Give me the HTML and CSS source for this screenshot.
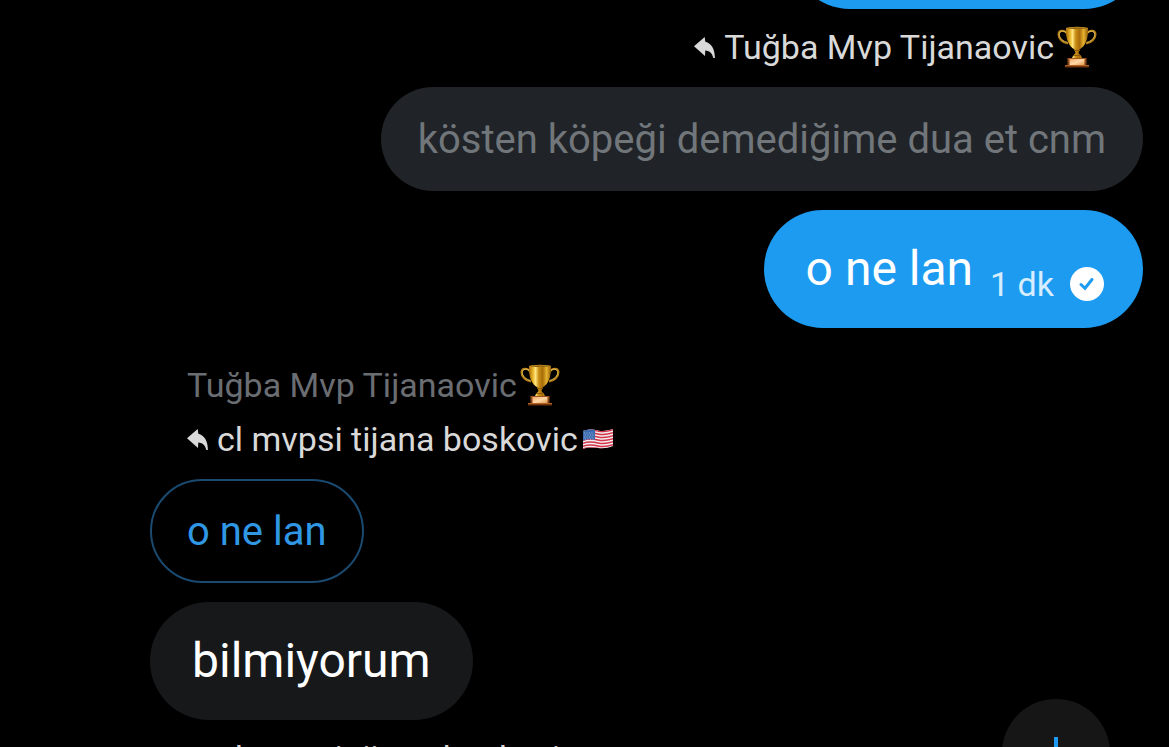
FILE: index.html
```
<!DOCTYPE html>
<html lang="tr">
<head>
  <meta charset="UTF-8" />
  <meta name="viewport" content="width=device-width, initial-scale=1.0" />
  <title>Mesajlar</title>
  <link rel="stylesheet" href="styles.css">
</head>
<body>
  <!-- shared icons -->
  <svg class="sprite" aria-hidden="true">
    <defs>
      <linearGradient id="gold" x1="0" y1="0" x2="1" y2="0">
        <stop offset="0" stop-color="#a86a08" />
        <stop offset="0.18" stop-color="#e8b52a" />
        <stop offset="0.3" stop-color="#ffe680" />
        <stop offset="0.44" stop-color="#c98d14" />
        <stop offset="0.62" stop-color="#a86c0a" />
        <stop offset="0.8" stop-color="#e6b22e" />
        <stop offset="1" stop-color="#8f5a08" />
      </linearGradient>
      <linearGradient id="wood" x1="0" y1="0" x2="0" y2="1">
        <stop offset="0" stop-color="#a4581c" />
        <stop offset="1" stop-color="#6b2f0c" />
      </linearGradient>
      <linearGradient id="plate" x1="0" y1="0" x2="1" y2="1">
        <stop offset="0" stop-color="#eda868" />
        <stop offset="0.5" stop-color="#ffd8a8" />
        <stop offset="1" stop-color="#e09a50" />
      </linearGradient>
      <clipPath id="flag-shape">
        <path d="M1 2C6 0 10 0 16 1.500S26 1 31 0V17C26 19 22 19.500 16 19S6 18 1 20Z" />
      </clipPath>
    </defs>
    <symbol id="reply" viewBox="0 0 21 21">
      <path d="M0 9.300L10.700 0L11.300 4.800C17.500 6.500 20.800 12 20.900 21H19.300C18.300 16.500 16 13.800 11.300 13.500L11 19Z" fill="currentColor" />
    </symbol>
    <symbol id="trophy" viewBox="0 0 40 42">
      <path d="M10.500 8C8 3.500 1.500 3.500 1.500 8.500C1.500 13 6 17 11 17.500M29.500 8C32 3.500 38.500 3.500 38.500 8.500C38.500 13 34 17 29 17.500" fill="none" stroke="#b57d16" stroke-width="2" />
      <path d="M10 7.500C7.500 4 2.300 4.500 2.300 8.500C2.300 12 6 15.500 10.500 16.300M30 7.500C32.500 4 37.700 4.500 37.700 8.500C37.700 12 34 15.500 29.500 16.300" fill="none" stroke="#f3d46a" stroke-width="0.800" />
      <path d="M9 2H31C31.500 13 28.500 20 22.500 23.500L21.500 27L24 30L25.500 33H14.500L16 30L18.500 27L17.500 23.500C11.500 20 8.500 13 9 2Z" fill="url(#gold)" />
      <ellipse cx="20" cy="2" rx="11" ry="1.200" fill="#d8a42c" />
      <ellipse cx="20" cy="2.200" rx="9.500" ry="0.600" fill="#7a4c08" />
      <path d="M17 24.500H23M16 29.500H24" stroke="#8d5b0a" stroke-width="1" />
      <path d="M10.500 32H29.500V39H32V41.500H8V39H10.500Z" fill="url(#wood)" />
      <rect x="12.500" y="33" width="15" height="6" fill="url(#plate)" />
      <path d="M8 39.500H32" stroke="#c8742c" stroke-width="0.700" />
    </symbol>
    <symbol id="flag-us" viewBox="0 0 32 20">
      <g clip-path="url(#flag-shape)">
        <rect width="32" height="20" fill="#f2eef0" />
        <path d="M0 2.500C6 .5 10 .5 16 2S26 2.500 32 .5M0 5.500C6 3.500 10 3.500 16 5S26 5.500 32 3.500M0 8.500C6 6.500 10 6.500 16 8S26 8.500 32 6.500M0 11.500C6 9.500 10 9.500 16 11S26 11.500 32 9.500M0 14.500C6 12.500 10 12.500 16 14S26 14.500 32 12.500M0 17.500C6 15.500 10 15.500 16 17S26 17.500 32 15.500M0 20C6 18.500 10 18 16 19.500S26 20 32 18.500" fill="none" stroke="#d4354a" stroke-width="1.500" />
        <path d="M0 0H13V11C9 10 6 10 0 12Z" fill="#3b6cb0" />
        <path d="M2 4H12M3 6H12M2 8H12M3 10H12" stroke="#a9c4e6" stroke-width="0.800" stroke-dasharray="1 1.500" />
      </g>
    </symbol>
  </svg>

  <main class="chat">
    <section class="group own">
      <div class="bubble sent previous"></div>
    </section>

    <section class="group own">
      <div class="line reply">
        <svg class="reply-icon" aria-hidden="true"><use href="#reply" /></svg>
        <span>Tuğba Mvp Tijanaovic</span>
        <svg class="trophy" role="img" aria-label="🏆"><use href="#trophy" /></svg>
      </div>
      <div class="quote">kösten köpeği demediğime dua et cnm</div>
      <div class="bubble sent">
        <span>o ne lan</span>
        <span class="status">
          <time>1 dk</time>
          <svg class="check" viewBox="0 0 34 34" aria-hidden="true">
            <circle cx="17" cy="17" r="17" fill="#fff" />
            <path d="M11 17.500L15 21.300L22 12.500" fill="none" stroke="#1d9bf0" stroke-width="3" stroke-linecap="round" />
          </svg>
        </span>
      </div>
    </section>

    <section class="group other">
      <div class="line name">
        <span>Tuğba Mvp Tijanaovic</span>
        <svg class="trophy" role="img" aria-label="🏆"><use href="#trophy" /></svg>
      </div>
      <div class="line reply">
        <svg class="reply-icon" aria-hidden="true"><use href="#reply" /></svg>
        <span>cl mvpsi tijana boskovic</span>
        <svg class="flag" role="img" aria-label="🇺🇸"><use href="#flag-us" /></svg>
      </div>
      <div class="quote outlined">o ne lan</div>
      <div class="bubble received">bilmiyorum</div>
    </section>

    <section class="group other">
      <div class="line reply">
        <svg class="reply-icon" aria-hidden="true"><use href="#reply" /></svg>
        <span>cl mvpsi tijana boskovic</span>
        <svg class="flag" role="img" aria-label="🇺🇸"><use href="#flag-us" /></svg>
      </div>
    </section>
  </main>

  <button class="add-btn" type="button" aria-label="Ekle">
    <svg viewBox="0 0 32 32" aria-hidden="true">
      <path d="M16 0V32M0 16H32" stroke="#1d9bf0" stroke-width="4" />
    </svg>
  </button>
</body>
</html>
```
FILE: styles.css
```
* {
  box-sizing: border-box;
}
body {
  margin: 0;
  background: #000;
  color: #fff;
  font-family: Roboto, "Noto Sans", sans-serif;
  overflow: hidden;
}
svg {
  display: block;
  flex: none;
}
.sprite {
  position: absolute;
  width: 0;
  height: 0;
}
.chat {
  display: flex;
  flex-direction: column;
  gap: 11px;
  height: 100vh;
  padding: 0 26px 0 150px;
  overflow: hidden;
}
.group {
  display: flex;
  flex-direction: column;
  flex: none;
  align-items: flex-start;
}
.own {
  align-items: flex-end;
}
.own + .other {
  margin-top: 19px;
}

/* name and reply lines */
.line {
  display: flex;
  align-items: center;
  height: 54px;
  padding: 0 37px;
  font-size: 34px;
  white-space: nowrap;
}
.name {
  color: #6a6d72;
}
.reply {
  color: #d9d9d9;
}
.reply-icon {
  width: 21px;
  height: 21px;
  margin-right: 9px;
}
.trophy {
  width: 40px;
  height: 42px;
  margin: 0 9px 0 3px;
}
.flag {
  width: 32px;
  height: 20px;
  margin-left: 4px;
}

/* bubbles */
.quote {
  margin: 13px 0 19px;
  padding: 27px 37px 25px;
  border-radius: 52px;
  background: #202327;
  color: #71767b;
  font-size: 40px;
  line-height: 52px;
}
.outlined {
  padding: 25px 35px 23px;
  border: 2px solid #1a4a70;
  background: transparent;
  color: #2f97e4;
}
.bubble {
  display: flex;
  align-items: flex-end;
  gap: 17px;
  padding: 24px 42px;
  border-radius: 59px;
  font-size: 48px;
  line-height: 70px;
}
.sent {
  padding-right: 39px;
  background: #1d9bf0;
}
.received {
  background: #16181a;
}
.previous {
  width: 352px;
  height: 118px;
  margin-top: -109px;
}
.status {
  display: flex;
  align-items: center;
  gap: 16px;
  color: #d6edff;
  font-size: 34px;
  line-height: 40px;
}
.check {
  width: 34px;
  height: 34px;
}

.add-btn {
  position: fixed;
  right: 59px;
  bottom: -60px;
  display: grid;
  place-items: center;
  width: 108px;
  height: 108px;
  padding: 0;
  border: none;
  border-radius: 50%;
  background: #161616;
  cursor: pointer;
}
.add-btn svg {
  width: 32px;
  height: 32px;
}
```
